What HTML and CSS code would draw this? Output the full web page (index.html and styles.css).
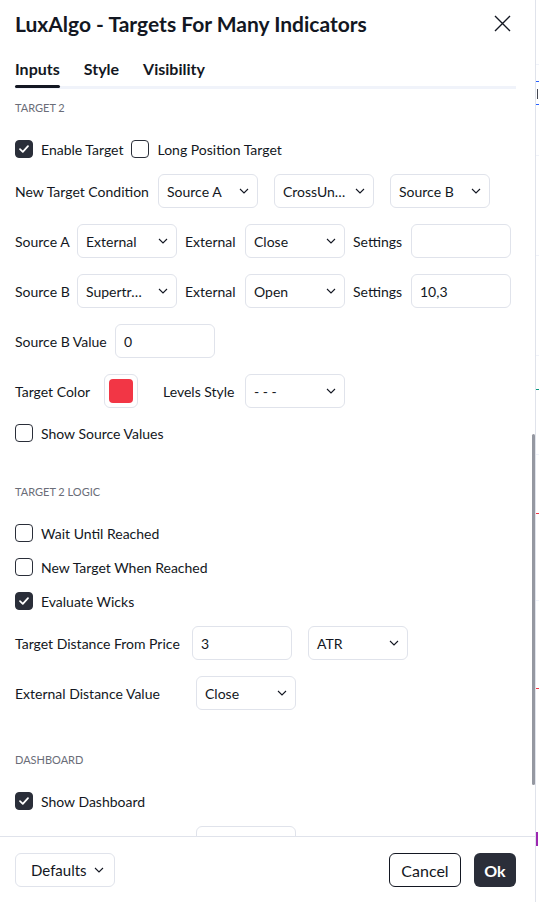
FILE: index.html
```html
<!DOCTYPE html>
<html lang="en">
<head>
  <meta charset="UTF-8" />
  <title>LuxAlgo - Targets For Many Indicators</title>
  <link rel="stylesheet" href="styles.css">
</head>
<body>
<div class="screen">
  <div class="dialog">
    <!-- Header -->
    <div class="dlg-head">
      <h1>LuxAlgo - Targets For Many Indicators</h1>
      <button class="close">
        <svg width="17" height="17" viewBox="0 0 17 17"><path d="M1 1l15 15M16 1L1 16" stroke="#131722" stroke-width="1.4" fill="none"/></svg>
      </button>
    </div>
    <!-- Tabs -->
    <div class="tabs">
      <span class="tab active">Inputs</span>
      <span class="tab">Style</span>
      <span class="tab">Visibility</span>
    </div>
    <!-- Inputs -->
    <div class="content">
      <div class="group-title first">TARGET 2</div>

      <div class="row check-row">
        <span class="cb checked"><svg width="12" height="10" viewBox="0 0 12 10"><path d="M2 5.2l2.8 2.6L10 2.2" stroke="#fff" stroke-width="1.8" fill="none" stroke-linecap="round" stroke-linejoin="round"/></svg></span>
        <span>Enable Target</span>
        <span class="cb"></span>
        <span>Long Position Target</span>
      </div>

      <div class="row">
        <span class="lbl w-cond">New Target Condition</span>
        <div class="select">Source A<svg width="10" height="6" viewBox="0 0 10 6"><path d="M1 1l4 4 4-4" stroke="#131722" stroke-width="1.1" fill="none"/></svg></div>
        <div class="select spaced">CrossUn…<svg width="10" height="6" viewBox="0 0 10 6"><path d="M1 1l4 4 4-4" stroke="#131722" stroke-width="1.1" fill="none"/></svg></div>
        <div class="select spaced">Source B<svg width="10" height="6" viewBox="0 0 10 6"><path d="M1 1l4 4 4-4" stroke="#131722" stroke-width="1.1" fill="none"/></svg></div>
      </div>

      <div class="row">
        <span class="lbl w-src">Source A</span>
        <div class="select">External<svg width="10" height="6" viewBox="0 0 10 6"><path d="M1 1l4 4 4-4" stroke="#131722" stroke-width="1.1" fill="none"/></svg></div>
        <span class="lbl w-ext">External</span>
        <div class="select">Close<svg width="10" height="6" viewBox="0 0 10 6"><path d="M1 1l4 4 4-4" stroke="#131722" stroke-width="1.1" fill="none"/></svg></div>
        <span class="lbl w-set">Settings</span>
        <div class="field"></div>
      </div>

      <div class="row">
        <span class="lbl w-src">Source B</span>
        <div class="select">Supertr…<svg width="10" height="6" viewBox="0 0 10 6"><path d="M1 1l4 4 4-4" stroke="#131722" stroke-width="1.1" fill="none"/></svg></div>
        <span class="lbl w-ext">External</span>
        <div class="select">Open<svg width="10" height="6" viewBox="0 0 10 6"><path d="M1 1l4 4 4-4" stroke="#131722" stroke-width="1.1" fill="none"/></svg></div>
        <span class="lbl w-set">Settings</span>
        <div class="field">10,3</div>
      </div>

      <div class="row">
        <span class="lbl w-bval">Source B Value</span>
        <div class="field">0</div>
      </div>

      <div class="row">
        <span class="lbl w-color">Target Color</span>
        <div class="swatch"><span class="swatch-fill"></span></div>
        <span class="lbl w-lvl">Levels Style</span>
        <div class="select">- - -<svg width="10" height="6" viewBox="0 0 10 6"><path d="M1 1l4 4 4-4" stroke="#131722" stroke-width="1.1" fill="none"/></svg></div>
      </div>

      <div class="row check-row">
        <span class="cb"></span>
        <span>Show Source Values</span>
      </div>

      <div class="group-title">TARGET 2 LOGIC</div>

      <div class="row check-row">
        <span class="cb"></span>
        <span>Wait Until Reached</span>
      </div>
      <div class="row check-row">
        <span class="cb"></span>
        <span>New Target When Reached</span>
      </div>
      <div class="row check-row">
        <span class="cb checked"><svg width="12" height="10" viewBox="0 0 12 10"><path d="M2 5.2l2.8 2.6L10 2.2" stroke="#fff" stroke-width="1.8" fill="none" stroke-linecap="round" stroke-linejoin="round"/></svg></span>
        <span>Evaluate Wicks</span>
      </div>

      <div class="row">
        <span class="lbl w-dist">Target Distance From Price</span>
        <div class="field">3</div>
        <div class="select spaced">ATR<svg width="10" height="6" viewBox="0 0 10 6"><path d="M1 1l4 4 4-4" stroke="#131722" stroke-width="1.1" fill="none"/></svg></div>
      </div>

      <div class="row">
        <span class="lbl w-extd">External Distance Value</span>
        <div class="select">Close<svg width="10" height="6" viewBox="0 0 10 6"><path d="M1 1l4 4 4-4" stroke="#131722" stroke-width="1.1" fill="none"/></svg></div>
      </div>

      <div class="group-title">DASHBOARD</div>

      <div class="row check-row">
        <span class="cb checked"><svg width="12" height="10" viewBox="0 0 12 10"><path d="M2 5.2l2.8 2.6L10 2.2" stroke="#fff" stroke-width="1.8" fill="none" stroke-linecap="round" stroke-linejoin="round"/></svg></span>
        <span>Show Dashboard</span>
      </div>

      <div class="row">
        <span class="lbl w-extd"></span>
        <div class="select"></div>
      </div>

      <div class="scroll-thumb"></div>
    </div>
    <!-- Footer -->
    <div class="footer">
      <div class="btn defaults">Defaults<svg width="10" height="6" viewBox="0 0 10 6"><path d="M1 1l4 4 4-4" stroke="#131722" stroke-width="1.1" fill="none"/></svg></div>
      <div class="actions">
        <div class="btn cancel">Cancel</div>
        <div class="btn ok">Ok</div>
      </div>
    </div>
  </div>
  <!-- chart behind the dialog -->
  <div class="chart-edge">
    <span class="mark grid g1"></span>
    <span class="mark blue b1"></span>
    <span class="mark glyph"></span>
    <span class="mark blue b2"></span>
    <span class="mark grid g2"></span>
    <span class="mark grid g3"></span>
    <span class="mark grid g4"></span>
    <span class="mark teal"></span>
    <span class="mark grid g5"></span>
    <span class="mark red r1"></span>
    <span class="mark grid g6"></span>
    <span class="mark red r2"></span>
    <span class="mark purple"></span>
  </div>
</div>
</body>
</html>
```

FILE: styles.css
```css
body {
  margin: 0;
  font-family: Lato, 'Noto Sans', sans-serif;
  color: #131722;
  background: #fff;
}
.screen {
  display: flex;
  height: 902px;
}
.dialog {
  width: 535px;
  height: 902px;
  display: flex;
  flex-direction: column;
  background: #fff;
  flex-shrink: 0;
}
.dlg-head {
  height: 46px;
  display: flex;
  align-items: center;
  justify-content: space-between;
  padding: 0 24px 0 15px;
}
.dlg-head h1 {
  margin: 0;
  font-size: 21px;
  font-weight: 700;
}
.close {
  border: none;
  background: none;
  padding: 0;
  width: 17px;
  height: 17px;
  display: flex;
}
.tabs {
  display: flex;
  gap: 24px;
  margin: 0 19px 0 15px;
  padding-top: 13px;
  border-bottom: 3px solid #f0f3fa;
}
.tab {
  position: relative;
  font-size: 16px;
  font-weight: 700;
  line-height: 20px;
  padding-bottom: 7px;
}
.tab.active::after {
  content: '';
  position: absolute;
  left: 0;
  right: 0;
  bottom: -2px;
  height: 3px;
  border-radius: 2px;
  background: #131722;
}
.content {
  flex: 1;
  position: relative;
  overflow: hidden;
  padding: 11px 15px 0;
}
.group-title {
  font-size: 11px;
  line-height: 16px;
  color: #6a6d78;
  margin: 42px 0 24px;
}
.group-title.first {
  margin-top: 0;
}
.row {
  display: flex;
  align-items: center;
  gap: 8px;
  height: 34px;
  margin-bottom: 16px;
  font-size: 14px;
  white-space: nowrap;
}
.check-row {
  height: 18px;
}
.lbl {
  flex-shrink: 0;
}
.w-cond { width: 135px; }
.w-src { width: 54px; }
.w-ext { width: 52px; }
.w-set { width: 50px; }
.w-bval { width: 92px; }
.w-color { width: 81px; }
.w-lvl { width: 74px; margin-left: 17px; }
.w-dist { width: 169px; }
.w-extd { width: 173px; }
.cb {
  width: 18px;
  height: 18px;
  box-sizing: border-box;
  border: 1px solid #2a2e39;
  border-radius: 4px;
  display: flex;
  align-items: center;
  justify-content: center;
  flex-shrink: 0;
}
.cb.checked {
  background: #2a2e39;
}
.select, .field {
  width: 100px;
  height: 34px;
  box-sizing: border-box;
  border: 1px solid #e0e3eb;
  border-radius: 6px;
  padding: 0 8px;
  display: flex;
  align-items: center;
  justify-content: space-between;
  flex-shrink: 0;
}
.spaced {
  margin-left: 8px;
}
.swatch {
  width: 34px;
  height: 34px;
  box-sizing: border-box;
  border: 1px solid #e0e3eb;
  border-radius: 6px;
  display: flex;
  align-items: center;
  justify-content: center;
}
.swatch-fill {
  width: 24px;
  height: 24px;
  border-radius: 4px;
  background: #f23645;
}
.scroll-thumb {
  position: absolute;
  right: 0;
  top: 345px;
  width: 3px;
  height: 351px;
  border-radius: 2px;
  background: #9598a1;
}
.footer {
  height: 66px;
  border-top: 1px solid #e0e3eb;
  display: flex;
  justify-content: space-between;
  align-items: flex-start;
  padding: 16px 19px 0 15px;
  box-sizing: border-box;
}
.actions {
  display: flex;
  gap: 13px;
}
.btn {
  height: 34px;
  box-sizing: border-box;
  border-radius: 6px;
  display: flex;
  align-items: center;
  font-size: 15px;
}
.defaults {
  width: 100px;
  border: 1px solid #e0e3eb;
  padding: 0 10px 0 15px;
  justify-content: space-between;
}
.cancel {
  width: 72px;
  border: 1px solid #131722;
  justify-content: center;
  font-size: 16px;
}
.ok {
  width: 42px;
  background: #2a2e39;
  color: #fff;
  font-weight: 700;
  font-size: 16px;
  justify-content: center;
}
.chart-edge {
  flex: 1;
  position: relative;
  border-left: 1px solid #e0e3eb;
  overflow: hidden;
}
.mark {
  position: absolute;
  left: 0;
  right: 0;
  height: 1px;
}
.grid { background: #f0f3fa; }
.g1 { top: 64px; }
.g2 { top: 155px; }
.g3 { top: 255px; }
.g4 { top: 355px; }
.g5 { top: 454px; }
.g6 { top: 600px; }
.blue { background: #2962ff; }
.b1 { top: 81px; }
.b2 { top: 104px; }
.glyph {
  top: 89px;
  left: 1px;
  width: 1px;
  height: 10px;
  background: #434651;
}
.teal { top: 389px; background: #089981; }
.red { background: #f23645; }
.r1 { top: 513px; }
.r2 { top: 688px; }
.purple { top: 832px; height: 14px; background: #9c27b0; width: 2px; }
```
